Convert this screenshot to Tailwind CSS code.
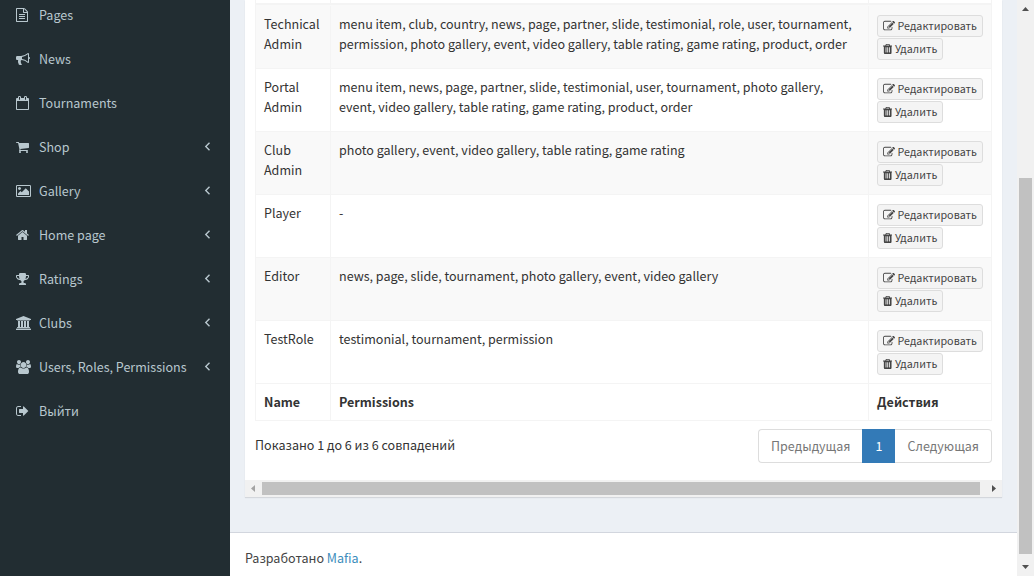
<!DOCTYPE html>
<html lang="ru">
<head>
<meta charset="utf-8">
<title>Roles</title>
<script src="https://cdn.jsdelivr.net/npm/@tailwindcss/browser@4"></script>
</head>
<body class="flex h-[576px] w-[1034px] overflow-hidden bg-[#ecf0f5] font-['Noto_Sans_CJK_SC','Noto_Sans',sans-serif] text-[12.54px] leading-5 text-[#333]">
<svg class="hidden">
  <symbol id="file" viewBox="128 0 1792 1792"><path d="M1596 380q28 28 48 76t20 88v1152q0 40-28 68t-68 28h-1344q-40 0-68-28t-28-68v-1600q0-40 28-68t68-28h896q40 0 88 20t76 48zm-444-244v376h376q-10-29-22-41l-313-313q-12-12-41-22zm384 1528v-1024h-416q-40 0-68-28t-28-68v-416h-768v1536h1280zm-1024-864q0-14 9-23t23-9h704q14 0 23 9t9 23v64q0 14-9 23t-23 9h-704q-14 0-23-9t-9-23v-64zm736 224q14 0 23 9t9 23v64q0 14-9 23t-23 9h-704q-14 0-23-9t-9-23v-64q0-14 9-23t23-9h704zm0 256q14 0 23 9t9 23v64q0 14-9 23t-23 9h-704q-14 0-23-9t-9-23v-64q0-14 9-23t23-9h704z"/></symbol>
  <symbol id="horn" viewBox="0 0 1792 1792"><path d="M1664 640q53 0 90.5 37.5t37.5 90.5-37.5 90.5-90.5 37.5v384q0 52-38 90t-90 38q-417-347-812-380-58 19-91 66t-31 100.500 40 92.500q-20 33-23 65.500t6 58 33.500 55 48 50 61.500 50.500q-29 58-111.500 83t-168.500 11.500-132-55.500q-7-23-29.500-87.500t-32-94.500-23-89-15-101 3.500-98.500 22-110.500h-122q-66 0-113-47t-47-113v-192q0-66 47-113t113-47h480q435 0 896-384 52 0 90 38t38 90v384zm-128 604v-954q-394 302-768 343v270q377 42 768 341z"/></symbol>
  <symbol id="calendar" viewBox="64 0 1792 1792"><path d="M192 1664h1408v-1024h-1408v1024zm384-1216v-288q0-14-9-23t-23-9h-64q-14 0-23 9t-9 23v288q0 14 9 23t23 9h64q14 0 23-9t9-23zm768 0v-288q0-14-9-23t-23-9h-64q-14 0-23 9t-9 23v288q0 14 9 23t23 9h64q14 0 23-9t9-23zm384-64v1280q0 52-38 90t-90 38h-1408q-52 0-90-38t-38-90v-1280q0-52 38-90t90-38h128v-96q0-66 47-113t113-47h64q66 0 113 47t47 113v96h384v-96q0-66 47-113t113-47h64q66 0 113 47t47 113v96h128q52 0 90 38t38 90z"/></symbol>
  <symbol id="cart" viewBox="64 0 1792 1792"><path d="M704 1536q0 52-38 90t-90 38-90-38-38-90 38-90 90-38 90 38 38 90zm896 0q0 52-38 90t-90 38-90-38-38-90 38-90 90-38 90 38 38 90zm128-1088v512q0 24-16.5 42.5t-40.5 21.5l-1044 122q13 60 13 70 0 16-24 64h920q26 0 45 19t19 45-19 45-45 19h-1024q-26 0-45-19t-19-45q0-11 8-31.5t16-36 21.5-40 15.5-29.5l-177-823h-204q-26 0-45-19t-19-45 19-45 45-19h256q16 0 28.5 6.5t19.5 15.5 13 24.5 8 26 5.5 29.5 4.5 26h1201q26 0 45 19t19 45z"/></symbol>
  <symbol id="picture" viewBox="0 0 1920 1792"><path d="M640 576q0 80-56 136t-136 56-136-56-56-136 56-136 136-56 136 56 56 136zm1024 384v448h-1408v-192l320-320 160 160 512-512zm96-704h-1600q-13 0-22.500 9.500t-9.500 22.500v1216q0 13 9.500 22.500t22.500 9.500h1600q13 0 22.500-9.500t9.500-22.500v-1216q0-13-9.500-22.500t-22.500-9.500zm160 32v1216q0 66-47 113t-113 47h-1600q-66 0-113-47t-47-113v-1216q0-66 47-113t113-47h1600q66 0 113 47t47 113z"/></symbol>
  <symbol id="home" viewBox="64 0 1792 1792"><path d="M1472 992v480q0 26-19 45t-45 19h-384v-384h-256v384h-384q-26 0-45-19t-19-45v-480q0-1 .5-3t.5-3l575-474 575 474q1 2 1 6zm223-69l-62 74q-8 9-21 11h-3q-13 0-21-7l-692-577-692 577q-12 8-24 7-13-2-21-11l-62-74q-8-10-7-23.500t11-21.500l719-599q32-26 76-26t76 26l244 204v-195q0-14 9-23t23-9h192q14 0 23 9t9 23v408l219 182q10 8 11 21.500t-7 23.500z"/></symbol>
  <symbol id="trophy" viewBox="64 0 1792 1792"><path d="M522 883q-74-162-74-371h-256v96q0 78 94.500 162t235.500 113zm1078-275v-96h-256q0 209-74 371 141-29 235.500-113t94.500-162zm128-128v128q0 71-41.500 143t-112 130-173 97.500-215.500 44.500q-42 54-95 95-38 34-52.500 72.500t-14.500 89.500q0 54 30.500 91t97.500 37q75 0 133.500 45.500t58.500 114.500v64q0 14-9 23t-23 9h-832q-14 0-23-9t-9-23v-64q0-69 58.500-114.500t133.500-45.500q67 0 97.500-37t30.500-91q0-51-14.500-89.500t-52.500-72.500q-53-41-95-95-113-5-215.500-44.500t-173-97.500-112-130-41.500-143v-128q0-40 28-68t68-28h288v-96q0-66 47-113t113-47h576q66 0 113 47t47 113v96h288q40 0 68 28t28 68z"/></symbol>
  <symbol id="bank" viewBox="0 0 1920 1792"><path d="M960 0l960 384v128h-128q0 26-20.500 45t-48.500 19h-1526q-28 0-48.500-19t-20.500-45h-128v-128zm-704 640h256v768h128v-768h256v768h128v-768h256v768h128v-768h256v768h59q28 0 48.500 19t20.500 45v64h-1664v-64q0-26 20.500-45t48.500-19h59v-768zm1595 960q28 0 48.500 19t20.500 45v128h-1920v-128q0-26 20.500-45t48.500-19h1782z"/></symbol>
  <symbol id="users" viewBox="0 0 1920 1792"><path d="M593 896q-162 5-265 128h-134q-82 0-138-40.500t-56-118.500q0-353 124-353 6 0 43.500 21t97.500 42.500 119 21.500q67 0 133-23-5 37-5 66 0 139 81 256zm1071 637q0 120-73 189.500t-194 69.500h-874q-121 0-194-69.500t-73-189.500q0-53 3.500-103.500t14-109 26.500-108.500 43-97.500 62-81 85.500-53.500 111.500-20q10 0 43 21.500t73 48 107 48 135 21.500 135-21.500 107-48 73-48 43-21.500q61 0 111.500 20t85.500 53.500 62 81 43 97.500 26.500 108.500 14 109 3.500 103.500zm-1024-1277q0 106-75 181t-181 75-181-75-75-181 75-181 181-75 181 75 75 181zm704 384q0 159-112.500 271.500t-271.500 112.500-271.500-112.500-112.500-271.500 112.500-271.500 271.500-112.500 271.500 112.500 112.500 271.500zm576 225q0 78-56 118.500t-138 40.500h-134q-103-123-265-128 81-117 81-256 0-29-5-66 66 23 133 23 59 0 119-21.500t97.500-42.500 43.500-21q124 0 124 353zm-128-609q0 106-75 181t-181 75-181-75-75-181 75-181 181-75 181 75 75 181z"/></symbol>
  <symbol id="exit" viewBox="64 0 1792 1792"><path d="M704 1440q0 4 1 20t.5 26.500-3 23.500-10 19.500-20.500 6.500h-320q-119 0-203.500-84.500t-84.500-203.500v-704q0-119 84.500-203.500t203.500-84.500h320q13 0 22.500 9.500t9.500 22.500q0 4 1 20t.5 26.500-3 23.500-10 19.500-20.500 6.500h-320q-66 0-113 47t-47 113v704q0 66 47 113t113 47h312l11.500 1 11.500 3 8 5.500 7 9 2 13.500zm928-544q0 26-19 45l-544 544q-19 19-45 19t-45-19-19-45v-288h-448q-26 0-45-19t-19-45v-384q0-26 19-45t45-19h448v-288q0-26 19-45t45-19 45 19l544 544q19 19 19 45z"/></symbol>
  <symbol id="edit" viewBox="0 0 1792 1792"><path d="M888 1184l116-116-152-152-116 116v56h96v96h56zm440-720q-16-16-33 1l-350 350q-17 17-1 33t33-1l350-350q17-17 1-33zm80 594v190q0 119-84.500 203.500t-203.500 84.500h-832q-119 0-203.500-84.500t-84.500-203.500v-832q0-119 84.500-203.500t203.500-84.500h832q63 0 117 25 15 7 18 23 3 17-9 29l-49 49q-14 14-32 8-23-6-45-6h-832q-66 0-113 47t-47 113v832q0 66 47 113t113 47h832q66 0 113-47t47-113v-126q0-13 9-22l64-64q15-15 35-7t20 29zm-96-738l288 288-672 672h-288v-288zm444 132l-92 92-288-288 92-92q28-28 68-28t68 28l152 152q28 28 28 68t-28 68z"/></symbol>
  <symbol id="trash" viewBox="192 0 1408 1792"><path d="M704 1376v-704q0-14-9-23t-23-9h-64q-14 0-23 9t-9 23v704q0 14 9 23t23 9h64q14 0 23-9t9-23zm256 0v-704q0-14-9-23t-23-9h-64q-14 0-23 9t-9 23v704q0 14 9 23t23 9h64q14 0 23-9t9-23zm256 0v-704q0-14-9-23t-23-9h-64q-14 0-23 9t-9 23v704q0 14 9 23t23 9h64q14 0 23-9t9-23zm-544-992h448l-48-117q-7-9-17-11h-317q-10 2-17 11zm928 32v64q0 14-9 23t-23 9h-96v948q0 83-47 143.500t-113 60.500h-832q-66 0-113-58.500t-47-141.500v-952h-96q-14 0-23-9t-9-23v-64q0-14 9-23t23-9h309l70-167q15-37 54-63t79-26h320q40 0 79 26t54 63l70 167h309q14 0 23 9t9 23z"/></symbol>
</svg>

<aside class="h-full w-[230px] shrink-0 overflow-hidden bg-[#222d32] text-[#b8c7ce]">
  <nav id="menu" class="-mt-[7px]"></nav>
</aside>

<main class="flex h-full w-[787px] shrink-0 flex-col">
  <section class="mx-[15px] flex h-[497px] w-[757px] flex-col bg-white shadow-[0_1px_1px_rgba(0,0,0,0.1)]">
    <div class="mx-[10px] w-[737px] border-x border-[#f4f4f4]">
      <div class="grid h-[3px] grid-cols-[74px_539px_1fr]">
        <div></div><div class="border-x border-[#f4f4f4]"></div><div></div>
      </div>
      <div class="h-[2px] bg-[#f4f4f4]"></div>
      <div id="rows"></div>
      <div class="grid h-[38px] grid-cols-[74px_539px_1fr] border-y border-[#f4f4f4] font-bold">
        <div class="px-2 pt-2">Name</div>
        <div class="border-x border-[#f4f4f4] px-2 pt-2">Permissions</div>
        <div class="px-2 pt-2">Действия</div>
      </div>
    </div>
    <div class="mx-[10px] mt-2 flex h-[34px] justify-between">
      <div class="whitespace-nowrap pt-1.5">Показано 1 до 6 из 6 совпадений</div>
      <div class="flex h-[34px] text-[#777]">
        <div class="flex w-[104px] items-center rounded-l border border-r-0 border-[#ddd] pl-3">Предыдущая</div>
        <div class="flex w-[33px] items-center justify-center bg-[#337ab7] pl-px text-white">1</div>
        <div class="flex w-[97px] items-center rounded-r border border-l-0 border-[#ddd] pl-[12.500px]">Следующая</div>
      </div>
    </div>
    <div class="mt-auto flex h-[17px] items-center bg-[#f1f1f1]">
      <svg class="h-[17px] w-[17px] shrink-0" viewBox="0 0 17 17"><path fill="#a3a3a3" d="M10 5v7L6 8.500z"/></svg>
      <div class="h-[13px] w-[718px] bg-[#c1c1c1]"></div>
      <svg class="ml-[5px] h-[17px] w-[17px] shrink-0" viewBox="0 0 17 17"><path fill="#505050" d="M7 5v7l4-3.500z"/></svg>
    </div>
  </section>
  <footer class="mt-[35px] flex-1 border-t border-[#d2d6de] bg-white px-[15px] pt-[15px] text-[#444]">Разработано <a class="text-[#3c8dbc]">Mafia</a>.</footer>
</main>

<div class="flex h-full w-[17px] shrink-0 flex-col items-center bg-[#f1f1f1]">
  <svg class="h-[17px] w-[17px] shrink-0" viewBox="0 0 17 17"><path fill="#505050" d="M5 11h7L8.500 7z"/></svg>
  <div class="mt-[161px] h-[376px] w-[13px] shrink-0 bg-[#c1c1c1]"></div>
  <svg class="mt-[5px] h-[17px] w-[17px] shrink-0" viewBox="0 0 17 17"><path fill="#505050" d="M5 6h7l-3.500 4z"/></svg>
</div>

<script>
const menu = [
  ['file', 'Pages'], ['horn', 'News'], ['calendar', 'Tournaments'], ['cart', 'Shop', 1],
  ['picture', 'Gallery', 1], ['home', 'Home page', 1], ['trophy', 'Ratings', 1],
  ['bank', 'Clubs', 1], ['users', 'Users, Roles, Permissions', 1], ['exit', 'Выйти']
];
const wide = ['picture', 'bank', 'users'];
document.getElementById('menu').innerHTML = menu.map(([icon, label, sub]) => `
  <a class="flex h-11 items-center pl-4 pr-[19px]">
    <span class="flex w-[23px] shrink-0"><svg class="h-[14px] ${wide.includes(icon) ? 'w-[15px]' : 'w-[14px]'} fill-current"><use href="#${icon}"/></svg></span>
    <span class="whitespace-nowrap">${label}</span>
    ${sub ? '<svg class="mb-[2px] ml-auto h-[9px] w-[7px] fill-none stroke-current stroke-[1.4]" viewBox="0 0 7 9"><path d="M5.500 .8 1.800 4.500l3.700 3.700"/></svg>' : ''}
  </a>`).join('');

const rows = [
  ['Technical Admin', 'menu item, club, country, news, page, partner, slide, testimonial, role, user, tournament,<br>permission, photo gallery, event, video gallery, table rating, game rating, product, order'],
  ['Portal Admin', 'menu item, news, page, partner, slide, testimonial, user, tournament, photo gallery,<br>event, video gallery, table rating, game rating, product, order'],
  ['Club Admin', 'photo gallery, event, video gallery, table rating, game rating'],
  ['Player', '-'],
  ['Editor', 'news, page, slide, tournament, photo gallery, event, video gallery'],
  ['TestRole', 'testimonial, tournament, permission']
];
document.getElementById('rows').innerHTML = rows.map(([name, perms], i) => `
  <div class="grid h-[63px] grid-cols-[74px_539px_1fr] ${i ? 'border-t border-[#f4f4f4]' : 'pt-px'} ${i % 2 ? 'bg-white' : 'bg-[#f9f9f9]'}">
    <div class="px-2 pt-2">${name}</div>
    <div class="whitespace-nowrap border-x border-[#f4f4f4] px-2 pt-2">${perms}</div>
    <div class="flex flex-col items-start gap-px px-2 pt-[9px] text-[10.740px] text-[#444]">
      <button class="flex h-[22px] w-[106px] items-center gap-[2.500px] whitespace-nowrap rounded-[3px] border border-[#ddd] bg-[#f4f4f4] pl-[5px]"><svg class="h-3 w-3 shrink-0 fill-current"><use href="#edit"/></svg>Редактировать</button>
      <button class="flex h-[22px] w-[66px] items-center gap-[2.500px] whitespace-nowrap rounded-[3px] border border-[#ddd] bg-[#f4f4f4] pl-[5px]"><svg class="h-3 w-[9.400px] shrink-0 fill-current"><use href="#trash"/></svg>Удалить</button>
    </div>
  </div>`).join('');
</script>
</body>
</html>
